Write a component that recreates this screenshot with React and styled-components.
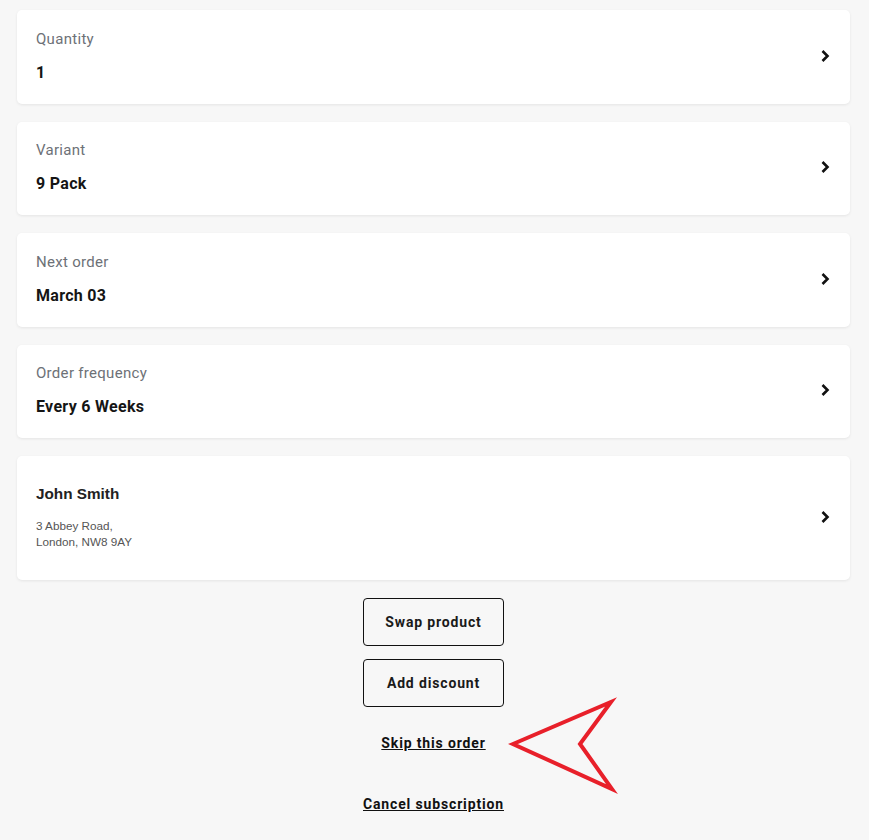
import styled, { createGlobalStyle } from "styled-components";

const GlobalStyle = createGlobalStyle`
  body {
    margin: 0;
    background: #f7f7f7;
    font-family: Roboto, "Liberation Sans", Arial, sans-serif;
  }
`;

const Page = styled.div`
  position: relative;
  padding: 10px 19px 20px 17px;
  display: flex;
  flex-direction: column;
  gap: 18px;
`;

const Card = styled.div`
  background: #fff;
  border-radius: 5px;
  box-shadow: 0 1px 3px rgba(0, 0, 0, 0.08);
  display: flex;
  align-items: center;
  justify-content: space-between;
  height: ${(p) => (p.$tall ? "124px" : "93.5px")};
  box-sizing: border-box;
  padding: 0 19px 2px 19px;
`;

const Info = styled.div`
  display: flex;
  flex-direction: column;
`;

const Label = styled.div`
  font-size: 15px;
  line-height: 20px;
  letter-spacing: 0.3px;
  color: #6d7177;
  margin-bottom: 14px;
`;

const Value = styled.div`
  font-size: 16px;
  line-height: 20px;
  font-weight: 700;
  letter-spacing: 0.3px;
  color: #151515;
`;

const Name = styled.div`
  font-family: "Liberation Sans", Arial, sans-serif;
  font-size: 15.3px;
  line-height: 20px;
  font-weight: 700;
  color: #222;
  margin-bottom: 14px;
`;

const Address = styled.div`
  font-family: "Liberation Sans", Arial, sans-serif;
  font-size: 11.7px;
  line-height: 16px;
  color: #555;
`;

const Chevron = () => (
  <svg width="12" height="14" viewBox="0 0 12 14">
    <path d="M3.5 2 L8.5 7 L3.5 12" fill="none" stroke="#111" strokeWidth="2.6" />
  </svg>
);

const Actions = styled.div`
  display: flex;
  flex-direction: column;
  align-items: center;
  gap: 13px;
`;

const Button = styled.button`
  width: 141px;
  height: 48px;
  border: 1px solid #111;
  border-radius: 4px;
  background: transparent;
  font-family: Roboto, "Liberation Sans", sans-serif;
  font-size: 14px;
  font-weight: 700;
  letter-spacing: 0.85px;
  color: #1a1a1a;
`;

const TextLink = styled.a`
  font-size: 14px;
  font-weight: 700;
  letter-spacing: 0.85px;
  color: #111;
  text-decoration: underline;
  margin-top: ${(p) => p.$top}px;
  line-height: 20px;
`;

const Arrow = styled.svg`
  position: absolute;
  left: 505px;
  top: 697px;
`;

const rows = [
  { label: "Quantity", value: "1" },
  { label: "Variant", value: "9 Pack" },
  { label: "Next order", value: "March 03" },
  { label: "Order frequency", value: "Every 6 Weeks" },
];

export default function App() {
  return (
    <>
      <GlobalStyle />
      <Page>
        {rows.map((r) => (
          <Card key={r.label}>
            <Info>
              <Label>{r.label}</Label>
              <Value>{r.value}</Value>
            </Info>
            <Chevron />
          </Card>
        ))}
        <Card $tall>
          <Info>
            <Name>John Smith</Name>
            <Address>
              3 Abbey Road,
              <br />
              London, NW8 9AY
            </Address>
          </Info>
          <Chevron />
        </Card>
        <Actions>
          <Button>Swap product</Button>
          <Button>Add discount</Button>
          <TextLink $top={13}>Skip this order</TextLink>
          <TextLink $top={28}>Cancel subscription</TextLink>
        </Actions>
        <Arrow width="115" height="100" viewBox="0 0 115 100">
          <polygon
            points="8,47 106,5 75,47 107,92"
            fill="none"
            stroke="#e8202a"
            strokeWidth="4"
            strokeLinejoin="miter"
          />
        </Arrow>
      </Page>
    </>
  );
}
